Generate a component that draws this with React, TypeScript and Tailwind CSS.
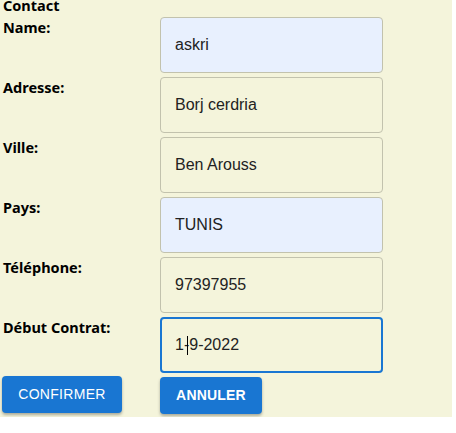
import React from 'react';

const rows = [
  { label: 'Name:', value: 'askri', filled: true },
  { label: 'Adresse:', value: 'Borj cerdria' },
  { label: 'Ville:', value: 'Ben Arouss' },
  { label: 'Pays:', value: 'TUNIS', filled: true },
  { label: 'Téléphone:', value: '97397955' },
];

const labelFont = { fontFamily: '"Noto Sans", "Open Sans", sans-serif' };

export default function App() {
  return (
    <div className="w-[452px] h-[417px] bg-[#f4f4db] overflow-hidden pl-[3px]" style={{ fontFamily: '"Liberation Sans", Arial, sans-serif' }}>
      <div className="h-[17px] -mt-[4px] text-[14.5px] font-bold leading-[18px] text-black" style={labelFont}>
        Contact
      </div>

      {/* form rows */}
      <div className="flex flex-col mt-[4px]">
        {rows.map((row) => (
          <div key={row.label} className="flex h-[60px]">
            <div className="w-[157px] pt-[1px] text-[14.5px] font-bold leading-[18px] text-black" style={labelFont}>
              {row.label}
            </div>
            <div
              className={`w-[223px] h-[56px] rounded-[4px] border border-[#c2c2ad] flex items-center pl-[14px] text-[16px] text-[#222] ${
                row.filled ? 'bg-[#e8f0fe] border-[#b9bfd0]' : ''
              }`}
            >
              {row.value}
            </div>
          </div>
        ))}

        <div className="flex h-[59px]">
          <div className="w-[157px] pt-[1px] text-[14.5px] font-bold leading-[18px] text-black" style={labelFont}>
            Début Contrat:
          </div>
          <div className="w-[223px] h-[56px] rounded-[4px] border-2 border-[#1976d2] flex items-center pl-[13px] text-[16px] text-[#222]">
            1-<span className="inline-block w-px h-[19px] bg-black -ml-[2px] mr-[1px]" />9-2022
          </div>
        </div>
      </div>

      {/* buttons */}
      <div className="flex items-start">
        <button className="w-[120px] h-[37px] -ml-[1px] rounded-[4px] bg-[#1976d2] text-white text-[14px] tracking-[0.3px] shadow-[0_2px_3px_rgba(0,0,0,0.3)]">
          CONFIRMER
        </button>
        <button className="ml-[38px] mt-[1px] w-[102px] h-[37px] rounded-[4px] bg-[#1976d2] text-white text-[14px] font-bold tracking-[0.2px] shadow-[0_2px_3px_rgba(0,0,0,0.3)]">
          ANNULER
        </button>
      </div>
    </div>
  );
}
